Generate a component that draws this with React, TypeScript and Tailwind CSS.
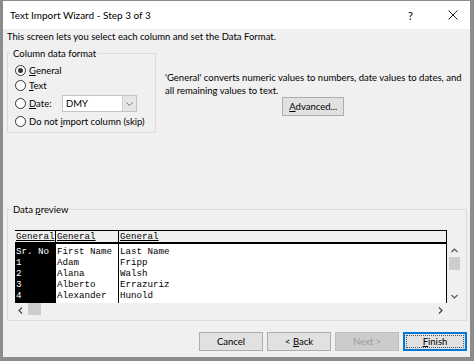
import React from "react";

function Radio({ checked }: { checked?: boolean }) {
  return (
    <span className="w-[11px] h-[11px] rounded-full border border-[#333] bg-white flex items-center justify-center shrink-0">
      {checked && <span className="w-[5px] h-[5px] rounded-full bg-[#333]" />}
    </span>
  );
}

function Btn({
  children,
  disabled,
  primary,
  className = "",
}: {
  children: React.ReactNode;
  disabled?: boolean;
  primary?: boolean;
  className?: string;
}) {
  if (primary) {
    return (
      <div className={"h-[19px] border-2 border-[#0078d7] bg-[#e1e1e1] p-[1px] flex " + className}>
        <div className="flex-1 border border-dotted border-[#555] flex items-center justify-center">
          {children}
        </div>
      </div>
    );
  }
  return (
    <div
      className={
        "h-[19px] border flex items-center justify-center " +
        (disabled
          ? "border-[#bfbfbf] bg-[#cccccc] text-[#9a9a9a] "
          : "border-[#adadad] bg-[#e1e1e1] ") +
        className
      }
    >
      {children}
    </div>
  );
}

const rows = [
  ["Sr. No", "First Name", "Last Name"],
  ["1", "Adam", "Fripp"],
  ["2", "Alana", "Walsh"],
  ["3", "Alberto", "Errazuriz"],
  ["4", "Alexander", "Hunold"],
];

export default function App() {
  return (
    <div className="w-[474px] h-[361px] bg-[#8c8c8c] pt-px pl-[3px] pr-[4px] pb-[4px] font-[Lato,sans-serif] text-[9.5px] leading-[13px] text-black">
      <div className="h-full flex flex-col bg-[#f0f0f0]">
        {/* title bar */}
        <div className="h-[28px] shrink-0 bg-white flex items-center pl-[7px]">
          <span className="flex-1 text-[10px]">Text Import Wizard - Step 3 of 3</span>
          <div className="w-[50px] mr-[12px] flex items-center justify-between">
            <span className="text-[11px] leading-[11px]">?</span>
            <svg width="10" height="10" viewBox="0 0 10 10">
              <path d="M0.5 0.5 L9.5 9.5 M9.5 0.5 L0.5 9.5" stroke="#222" strokeWidth="1" />
            </svg>
          </div>
        </div>

        {/* body */}
        <div className="flex-1 flex flex-col pl-[4px] pr-[3px]">
          <div className="mt-[1px] whitespace-nowrap">
            This screen lets you select each column and set the Data Format.
          </div>

          <div className="flex mt-[4px]">
            <fieldset className="w-[149px] h-[86px] border border-[#dcdcdc] shrink-0">
              <legend className="ml-[3px] px-[2px] whitespace-nowrap">Column data format</legend>
              <div className="flex flex-col pl-[7px] pt-[4px]">
                <div className="h-[13px] flex items-center gap-[3px]">
                  <Radio checked />
                  <span>
                    <span className="underline">G</span>eneral
                  </span>
                </div>
                <div className="h-[13px] mt-[2px] flex items-center gap-[3px]">
                  <Radio />
                  <span>
                    <span className="underline">T</span>ext
                  </span>
                </div>
                <div className="h-[17px] mt-[3px] flex items-center gap-[3px]">
                  <Radio />
                  <span className="w-[30px]">
                    <span className="underline">D</span>ate:
                  </span>
                  <div className="w-[75px] h-[17px] bg-white border border-[#c4c4c4] flex items-center">
                    <span className="flex-1 pl-[3px]">DMY</span>
                    <div className="w-[14px] h-full bg-[#e6e6e6] border-l border-[#d0d0d0] flex items-center justify-center">
                      <svg width="7" height="4" viewBox="0 0 7 4">
                        <path d="M0.5 0.5 L3.5 3.5 L6.5 0.5" stroke="#777" fill="none" strokeWidth="1" />
                      </svg>
                    </div>
                  </div>
                </div>
                <div className="h-[13px] mt-[3px] flex items-center gap-[3px] whitespace-nowrap">
                  <Radio />
                  <span>
                    Do not <span className="underline">i</span>mport column (skip)
                  </span>
                </div>
              </div>
            </fieldset>

            <div className="ml-[9px] mt-[24px] flex flex-col items-center">
              <div className="whitespace-nowrap">
                'General' converts numeric values to numbers, date values to dates, and
                <br />
                all remaining values to text.
              </div>
              <Btn className="w-[62px] h-[17px] mt-[0px]">
                <span>
                  <span className="underline">A</span>dvanced...
                </span>
              </Btn>
            </div>
          </div>

          {/* data preview */}
          <fieldset className="mt-[70px] h-[118px] border border-[#dcdcdc]">
            <legend className="ml-[3px] px-[2px]">
              Data <span className="underline">p</span>review
            </legend>
            <div className="pl-[7px] pt-[14px] flex flex-col">
              <div className="flex">
                {/* table */}
                <div className="w-[432px] flex flex-col font-['Liberation_Mono',monospace] text-[9.2px] leading-[11px]">
                  <div className="flex h-[14px] border-t border-black border-b-2 border-b-black bg-[#efefef] border-r border-r-black">
                    <div className="w-[40px] underline pl-px overflow-hidden whitespace-nowrap">General</div>
                    <div className="w-[63px] border-l border-black underline pl-px">General</div>
                    <div className="flex-1 border-l border-black underline pl-px">General</div>
                  </div>
                  <div className="flex h-[59px] bg-white border-r border-black">
                    <div className="w-[40px] bg-black text-white pt-[2px] pl-px">
                      {rows.map((r) => (
                        <div key={r[0]} className="h-[11px] whitespace-nowrap">{r[0]}</div>
                      ))}
                    </div>
                    <div className="w-[63px] border-l border-black pt-[2px] pl-px">
                      {rows.map((r) => (
                        <div key={r[1]} className="h-[11px] whitespace-nowrap">{r[1]}</div>
                      ))}
                    </div>
                    <div className="flex-1 border-l border-black pt-[2px] pl-px">
                      {rows.map((r) => (
                        <div key={r[2]} className="h-[11px] whitespace-nowrap">{r[2]}</div>
                      ))}
                    </div>
                  </div>
                </div>
                {/* vertical scrollbar */}
                <div className="w-[13px] ml-[1px] mt-[14px] h-[59px] flex flex-col items-center">
                  <svg width="7" height="5" viewBox="0 0 7 5" className="mt-[4px]">
                    <path d="M0.5 4 L3.5 1 L6.5 4" stroke="#555" fill="none" strokeWidth="1.2" />
                  </svg>
                  <div className="w-[11px] h-[13px] bg-[#cdcdcd] mt-[4px]" />
                  <div className="flex-1" />
                  <svg width="7" height="5" viewBox="0 0 7 5" className="mb-[4px]">
                    <path d="M0.5 1 L3.5 4 L6.5 1" stroke="#555" fill="none" strokeWidth="1.2" />
                  </svg>
                </div>
              </div>
              {/* horizontal scrollbar */}
              <div className="w-[432px] h-[14px] flex items-center">
                <svg width="5" height="7" viewBox="0 0 5 7" className="ml-[3px]">
                  <path d="M4 0.5 L1 3.5 L4 6.5" stroke="#444" fill="none" strokeWidth="1.2" />
                </svg>
                <div className="w-[13px] h-[12px] bg-[#cdcdcd] ml-[5px] self-start" />
                <div className="flex-1" />
                <svg width="5" height="7" viewBox="0 0 5 7" className="mr-[4px]">
                  <path d="M1 0.5 L4 3.5 L1 6.5" stroke="#444" fill="none" strokeWidth="1.2" />
                </svg>
              </div>
            </div>
          </fieldset>

          {/* buttons */}
          <div className="mt-[11px] flex justify-end gap-[4px]">
            <Btn className="w-[64px]">Cancel</Btn>
            <Btn className="w-[64px]">
              <span>
                &lt; <span className="underline">B</span>ack
              </span>
            </Btn>
            <Btn disabled className="w-[64px]">
              Next &gt;
            </Btn>
            <Btn primary className="w-[64px]">
              <span>
                <span className="underline">F</span>inish
              </span>
            </Btn>
          </div>
        </div>
      </div>
    </div>
  );
}
